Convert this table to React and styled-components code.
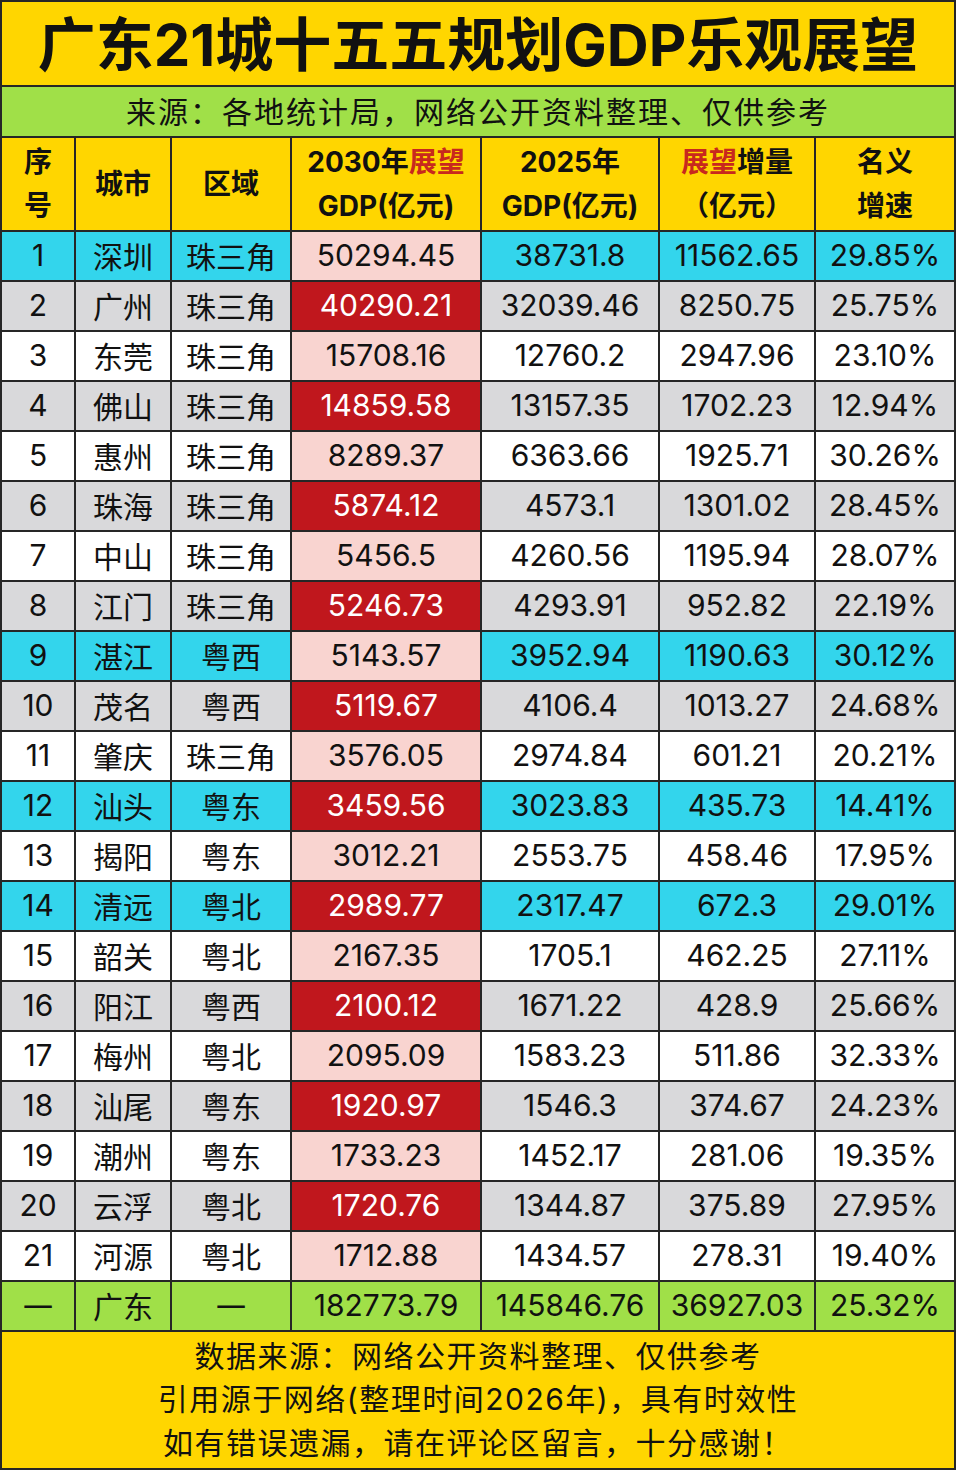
import styled, { createGlobalStyle } from "styled-components";

const GlobalStyle = createGlobalStyle`
  body {
    margin: 0;
    background: #ffffff;
    font-family: Inter, "Noto Sans CJK SC", sans-serif;
  }
`;

const rows = [
  ["1", "深圳", "珠三角", "50294.45", "38731.8", "11562.65", "29.85%"],
  ["2", "广州", "珠三角", "40290.21", "32039.46", "8250.75", "25.75%"],
  ["3", "东莞", "珠三角", "15708.16", "12760.2", "2947.96", "23.10%"],
  ["4", "佛山", "珠三角", "14859.58", "13157.35", "1702.23", "12.94%"],
  ["5", "惠州", "珠三角", "8289.37", "6363.66", "1925.71", "30.26%"],
  ["6", "珠海", "珠三角", "5874.12", "4573.1", "1301.02", "28.45%"],
  ["7", "中山", "珠三角", "5456.5", "4260.56", "1195.94", "28.07%"],
  ["8", "江门", "珠三角", "5246.73", "4293.91", "952.82", "22.19%"],
  ["9", "湛江", "粤西", "5143.57", "3952.94", "1190.63", "30.12%"],
  ["10", "茂名", "粤西", "5119.67", "4106.4", "1013.27", "24.68%"],
  ["11", "肇庆", "珠三角", "3576.05", "2974.84", "601.21", "20.21%"],
  ["12", "汕头", "粤东", "3459.56", "3023.83", "435.73", "14.41%"],
  ["13", "揭阳", "粤东", "3012.21", "2553.75", "458.46", "17.95%"],
  ["14", "清远", "粤北", "2989.77", "2317.47", "672.3", "29.01%"],
  ["15", "韶关", "粤北", "2167.35", "1705.1", "462.25", "27.11%"],
  ["16", "阳江", "粤西", "2100.12", "1671.22", "428.9", "25.66%"],
  ["17", "梅州", "粤北", "2095.09", "1583.23", "511.86", "32.33%"],
  ["18", "汕尾", "粤东", "1920.97", "1546.3", "374.67", "24.23%"],
  ["19", "潮州", "粤东", "1733.23", "1452.17", "281.06", "19.35%"],
  ["20", "云浮", "粤北", "1720.76", "1344.87", "375.89", "27.95%"],
  ["21", "河源", "粤北", "1712.88", "1434.57", "278.31", "19.40%"],
];

const total = ["一", "广东", "一", "182773.79", "145846.76", "36927.03", "25.32%"];

// rows painted cyan in the source sheet
const highlighted = [1, 9, 12, 14];

const YELLOW = "#ffd600";
const GREEN = "#a0e048";
const CYAN = "#33d5ec";
const GRAY = "#d9d9db";
const PINK = "#f9d4d0";
const RED = "#c0171d";

function rowColors(idx) {
  const n = idx + 1;
  const even = n % 2 === 0;
  let bg = even ? GRAY : "#ffffff";
  if (highlighted.includes(n)) bg = CYAN;
  return {
    bg,
    gdpBg: even ? RED : PINK,
    gdpColor: even ? "#ffffff" : "#111111",
  };
}

function App() {
  return (
    <>
      <GlobalStyle />
      <Sheet>
        <Title>广东21城十五五规划GDP乐观展望</Title>
        <Subtitle>来源：各地统计局，网络公开资料整理、仅供参考</Subtitle>

        <HeadCell>
          序<br />号
        </HeadCell>
        <HeadCell>城市</HeadCell>
        <HeadCell>区域</HeadCell>
        <HeadCell>
          <span>
            2030年<Accent>展望</Accent>
          </span>
          <span>GDP(亿元)</span>
        </HeadCell>
        <HeadCell>
          <span>2025年</span>
          <span>GDP(亿元)</span>
        </HeadCell>
        <HeadCell>
          <span>
            <Accent>展望</Accent>增量
          </span>
          <span>（亿元）</span>
        </HeadCell>
        <HeadCell>
          <span>名义</span>
          <span>增速</span>
        </HeadCell>

        {rows.map((row, i) => {
          const c = rowColors(i);
          return row.map((val, j) =>
            j === 3 ? (
              <Cell key={`${i}-${j}`} $bg={c.gdpBg} $color={c.gdpColor}>
                {val}
              </Cell>
            ) : (
              <Cell key={`${i}-${j}`} $bg={c.bg}>
                {val}
              </Cell>
            )
          );
        })}

        {total.map((val, j) => (
          <Cell key={`t-${j}`} $bg={GREEN}>
            {val}
          </Cell>
        ))}

        <Footer>
          <span>数据来源：网络公开资料整理、仅供参考</span>
          <span>引用源于网络(整理时间2026年)，具有时效性</span>
          <span>如有错误遗漏，请在评论区留言，十分感谢！</span>
        </Footer>
      </Sheet>
    </>
  );
}

// Styled Components
const Sheet = styled.div`
  display: grid;
  grid-template-columns: 72px 94px 118px 188px 176px 154px 138px;
  gap: 2px;
  padding: 2px;
  width: 956px;
  box-sizing: border-box;
  background: #262626;
  color: #111111;
`;

const Title = styled.div`
  grid-column: 1 / -1;
  height: 83px;
  display: flex;
  align-items: center;
  justify-content: center;
  padding-bottom: 6px;
  box-sizing: border-box;
  background: ${YELLOW};
  font-size: 58px;
  font-weight: 700;
`;

const Subtitle = styled.div`
  grid-column: 1 / -1;
  height: 49px;
  display: flex;
  align-items: center;
  justify-content: center;
  padding-bottom: 3px;
  box-sizing: border-box;
  background: ${GREEN};
  font-size: 30px;
  letter-spacing: 2px;
`;

const HeadCell = styled.div`
  height: 92px;
  display: flex;
  flex-direction: column;
  align-items: center;
  justify-content: center;
  background: ${YELLOW};
  font-size: 28px;
  font-weight: 700;
  line-height: 44px;
  text-align: center;
  white-space: nowrap;
`;

const Accent = styled.span`
  color: #c8281e;
`;

const Cell = styled.div`
  height: 48px;
  display: flex;
  align-items: center;
  justify-content: center;
  padding-bottom: 2px;
  box-sizing: border-box;
  background: ${(props) => props.$bg};
  color: ${(props) => props.$color || "#111111"};
  font-size: 30px;
  white-space: nowrap;
`;

const Footer = styled.div`
  grid-column: 1 / -1;
  height: 136px;
  display: flex;
  flex-direction: column;
  align-items: center;
  justify-content: center;
  background: ${YELLOW};
  font-size: 30px;
  line-height: 43.5px;
  letter-spacing: 1.5px;
`;

export default App;
